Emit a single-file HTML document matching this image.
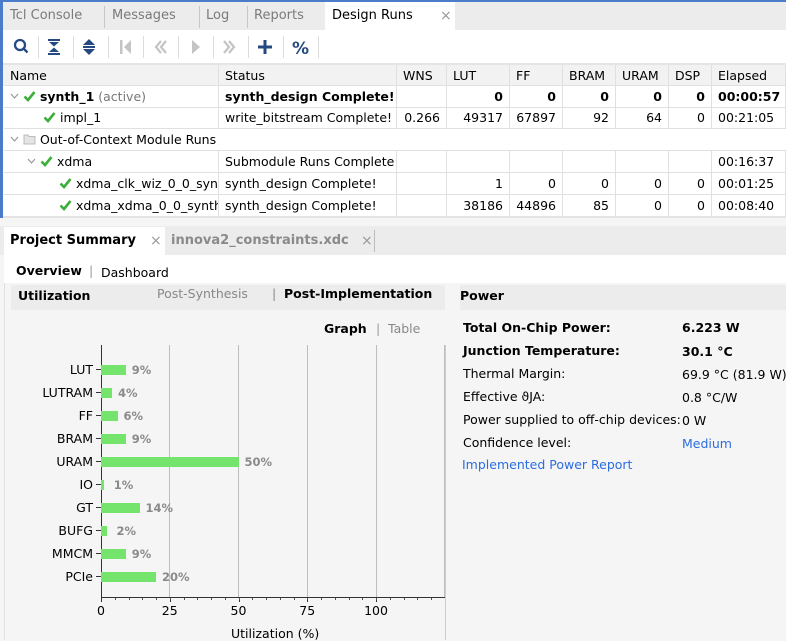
<!DOCTYPE html>
<html><head><meta charset="utf-8"><style>
*{margin:0;padding:0;box-sizing:border-box}
body{width:786px;height:640px;overflow:hidden;background:#f5f5f5;font-family:"DejaVu Sans","Liberation Sans",sans-serif;font-size:12.5px;color:#000;position:relative}
.a{position:absolute;white-space:nowrap}
.tab{position:absolute;top:2px;height:28px;line-height:28px;color:#7a7a7a;font-size:13px}
.sep{position:absolute;width:1px;background:#c8c8c8}
.cell{position:absolute;height:22px;line-height:22px;border-right:1px solid #e0e0e0;border-bottom:1px solid #e0e0e0;overflow:hidden;white-space:nowrap;padding:0 6px}
.r{text-align:right}
.b{font-weight:bold}
.ck{display:inline-block;width:13px;height:12px;vertical-align:-1px}
.cv{display:inline-block;width:9px;height:6px;vertical-align:2px}
.grid{position:absolute;top:345px;height:253px;width:1px;background:#bdbdbd}
.bar{position:absolute;height:10px;background:#74e46c;left:101px}
.yl{position:absolute;right:693px;font-size:12.5px;line-height:14px}
.pct{position:absolute;font-size:11.5px;font-weight:bold;color:#8a8a8a;line-height:14px}
</style></head><body>
<div class="a" style="left:0;top:0;width:786px;height:218px;background:#fff"></div>
<div class="a" style="left:0;top:0;width:786px;height:2px;background:#4a7cc9"></div>
<div class="a" style="left:0;top:0;width:3px;height:218px;background:#4a7cc9"></div>
<div class="a" style="left:3px;top:2px;width:783px;height:28px;background:#ececec"></div>
<div class="tab" style="left:10px">Tcl Console</div>
<div class="sep" style="left:104px;top:6px;height:22px"></div>
<div class="tab" style="left:112px">Messages</div>
<div class="sep" style="left:199px;top:6px;height:22px"></div>
<div class="tab" style="left:206px">Log</div>
<div class="sep" style="left:247px;top:6px;height:22px"></div>
<div class="tab" style="left:254px">Reports</div>
<div class="a" style="left:325px;top:2px;width:130px;height:28px;background:#fff"></div>
<div class="tab" style="left:332px;color:#000">Design Runs</div>
<div class="tab" style="left:440px;color:#999;font-size:14px">×</div>
<div class="a" style="left:3px;top:30px;width:783px;height:33px;background:#fff"></div>
<svg class="a" style="left:0;top:34px" width="330" height="26" viewBox="0 0 330 26">
<g fill="none" stroke="#254a82" stroke-width="2.3"><circle cx="20" cy="11" r="5"/><line x1="23.5" y1="14.5" x2="27.5" y2="18.5"/></g>
<g fill="#254a82"><rect x="48" y="5" width="12" height="2"/><rect x="48" y="19" width="12" height="2"/><polygon points="49,8 59,8 54,12.5"/><polygon points="49,18 59,18 54,13.5"/>
<polygon points="89,5 95,11 83,11"/><polygon points="89,21 95,15 83,15"/><rect x="83" y="12" width="12" height="2"/>
<rect x="258" y="11.5" width="14" height="3"/><rect x="263.5" y="6" width="3" height="14"/></g>
<text x="292" y="20" font-family="DejaVu Sans" font-weight="bold" font-size="17" fill="#254a82">%</text>
<g fill="#c4c4c4"><rect x="120" y="6" width="2.5" height="14"/><polygon points="131,6 131,20 124,13"/>
<polyline points="161,7 156,13 161,19" fill="none" stroke="#c4c4c4" stroke-width="2.2"/><polyline points="166,7 161,13 166,19" fill="none" stroke="#c4c4c4" stroke-width="2.2"/>
<polygon points="192,6 192,20 200,13"/>
<polyline points="224,7 229,13 224,19" fill="none" stroke="#c4c4c4" stroke-width="2.2"/><polyline points="229,7 234,13 229,19" fill="none" stroke="#c4c4c4" stroke-width="2.2"/></g>
<g fill="#dcdcdc"><rect x="38" y="2" width="1" height="22"/><rect x="73" y="2" width="1" height="22"/><rect x="108" y="2" width="1" height="22"/><rect x="143" y="2" width="1" height="22"/><rect x="178" y="2" width="1" height="22"/><rect x="213" y="2" width="1" height="22"/><rect x="248" y="2" width="1" height="22"/><rect x="283" y="2" width="1" height="22"/><rect x="318" y="2" width="1" height="22"/></g>
</svg>
<div class="a" style="left:3px;top:63px;width:783px;height:2px;background:#e4e4e4"></div>
<div class="a" style="left:3px;top:65px;width:783px;height:21px;background:#f2f2f2"></div>
<div id="tbl"></div>
<div class="a" style="left:3px;top:216px;width:783px;height:2px;background:#e4e4e4"></div>
<script>
var CK='<svg class="ck" viewBox="0 0 13 12"><polyline points="1.5,6.5 5,10 11.5,2" fill="none" stroke="#3cae3c" stroke-width="2.6"/></svg>';
var CV='<svg class="cv" viewBox="0 0 9 6"><polyline points="1,1 4.5,5 8,1" fill="none" stroke="#999" stroke-width="1.2"/></svg>';
var FD='<svg class="ck" viewBox="0 0 13 12"><path d="M1,2 h4 l1,1.5 h6 v7.5 h-11 z" fill="#e4e4e4" stroke="#bbb"/></svg>';
var cols=[4,219,397,447,510,563,616,669,712,786];
var rows=[
 [65,["Name","Status","WNS","LUT","FF","BRAM","URAM","DSP","Elapsed"],"h"],
 [86,[CV+' '+CK+' <b>synth_1</b> <span style="color:#777">(active)</span>','<b>synth_design Complete!</b>','','<b>0</b>','<b>0</b>','<b>0</b>','<b>0</b>','<b>0</b>','<b>00:00:57</b>']],
 [107,['<span style="padding-left:33px"></span>'+CK+' impl_1','write_bitstream Complete!','0.266','49317','67897','92','64','0','00:21:05']],
 [129,null],
 [151,['<span style="padding-left:17px"></span>'+CV+' '+CK+' xdma','Submodule Runs Complete','','','','','','','00:16:37']],
 [173,['<span style="padding-left:49px"></span>'+CK+' xdma_clk_wiz_0_0_synth_1','synth_design Complete!','','1','0','0','0','0','00:01:25']],
 [195,['<span style="padding-left:49px"></span>'+CK+' xdma_xdma_0_0_synth_1','synth_design Complete!','','38186','44896','85','0','0','00:08:40']]
];
var h='';
rows.forEach(function(r){
 if(!r[1]){h+='<div class="cell" style="left:4px;top:'+r[0]+'px;width:782px;border-right:none">'+CV+' '+FD+' Out-of-Context Module Runs</div>';return;}
 for(var i=0;i<9;i++){var al=(i>=2&&i<8&&r[2]!="h")?'r':'';
  h+='<div class="cell '+al+'" style="left:'+cols[i]+'px;top:'+r[0]+'px;width:'+(cols[i+1]-cols[i])+'px;'+(r[2]=="h"?'height:21px;line-height:21px;':'')+'">'+r[1][i]+'</div>';}
});
document.getElementById('tbl').innerHTML=h;
</script>
<div class="a" style="left:0;top:226px;width:786px;height:29px;background:#ececec"></div>
<div class="a" style="left:4px;top:227px;width:161px;height:28px;background:#fff"></div>
<div class="a b" style="left:10px;top:233px;font-size:13px">Project Summary</div>
<div class="a" style="left:150px;top:233px;color:#999;font-size:14px">×</div>
<div class="a b" style="left:171px;top:233px;color:#8a8a8a;font-size:13px">innova2_constraints.xdc</div>
<div class="a" style="left:361px;top:233px;color:#999;font-size:14px">×</div>
<div class="sep" style="left:374px;top:230px;height:22px;background:#bbb"></div>
<div class="a" style="left:4px;top:255px;width:782px;height:28px;background:#fff"></div>
<div class="a b" style="left:16px;top:263px">Overview</div>
<div class="a" style="left:89px;top:263px;color:#999">|</div>
<div class="a" style="left:101px;top:265px">Dashboard</div>
<div class="a" style="left:4px;top:283px;width:1px;height:357px;background:#e0e0e0"></div>
<div class="a" style="left:11px;top:285px;width:434px;height:25px;background:#ececec"></div>
<div class="a b" style="left:18px;top:288px">Utilization</div>
<div class="a" style="left:157px;top:286px;color:#888">Post-Synthesis</div>
<div class="a" style="left:272px;top:286px;color:#888">|</div>
<div class="a b" style="left:284px;top:286px">Post-Implementation</div>
<div class="a b" style="left:324px;top:321px">Graph</div>
<div class="a" style="left:376px;top:321px;color:#999">|</div>
<div class="a" style="left:388px;top:321px;color:#888">Table</div>
<div class="grid" style="left:169px"></div><div class="grid" style="left:238px"></div><div class="grid" style="left:307px"></div><div class="grid" style="left:376px"></div><div class="grid" style="left:444px"></div>
<div class="a" style="left:101px;top:345px;width:1px;height:253px;background:#333"></div>
<div class="a" style="left:101px;top:597px;width:345px;height:1px;background:#333"></div>
<div id="ch"></div>
<script>
var d=[["LUT",9],["LUTRAM",4],["FF",6],["BRAM",9],["URAM",50],["IO",1],["GT",14],["BUFG",2],["MMCM",9],["PCIe",20]];
var s='';
d.forEach(function(e,i){var y=365+i*23;var w=Math.max(2,e[1]*2.75);
 s+='<div class="yl" style="top:'+(y-2)+'px">'+e[0]+'</div>';
 s+='<div class="a" style="left:96px;top:'+(y+4)+'px;width:5px;height:1px;background:#333"></div>';
 s+='<div class="bar" style="top:'+y+'px;width:'+w+'px"></div>';
 s+='<div class="pct" style="left:'+(101+w+(w<10?10:6))+'px;top:'+(y-2)+'px">'+e[1]+'%</div>';});
[0,25,50,75,100].forEach(function(v,i){var x=101+v*2.75;
 s+='<div class="a" style="left:'+x+'px;top:598px;width:1px;height:4px;background:#333"></div>';
 s+='<div class="a" style="left:'+(x-20)+'px;top:603px;width:40px;text-align:center">'+v+'</div>';});
for(var k=1;k<25;k++){var x=101+k*2.75*5;if(x<446)s+='<div class="a" style="left:'+x+'px;top:598px;width:1px;height:2px;background:#555"></div>';}
document.getElementById('ch').innerHTML=s;
</script>
<div class="a" style="left:231px;top:626px">Utilization (%)</div>
<div class="a" style="left:460px;top:285px;width:326px;height:25px;background:#ececec"></div>
<div class="a b" style="left:460px;top:288px">Power</div>
<div class="a" style="left:445px;top:345px;width:1px;height:295px;background:#ccc"></div>
<div class="a b" style="left:463px;top:320px">Total On-Chip Power:</div>
<div class="a b" style="left:682px;top:320px">6.223 W</div>
<div class="a b" style="left:463px;top:343px">Junction Temperature:</div>
<div class="a b" style="left:682px;top:344px">30.1 °C</div>
<div class="a" style="left:463px;top:366px">Thermal Margin:</div>
<div class="a" style="left:682px;top:367px">69.9 °C (81.9 W)</div>
<div class="a" style="left:463px;top:389px">Effective ϑJA:</div>
<div class="a" style="left:682px;top:390px">0.8 °C/W</div>
<div class="a" style="left:463px;top:412px">Power supplied to off-chip devices:</div>
<div class="a" style="left:682px;top:413px">0 W</div>
<div class="a" style="left:463px;top:435px">Confidence level:</div>
<div class="a" style="left:682px;top:436px;color:#2b6de0">Medium</div>
<div class="a" style="left:462px;top:457px;color:#2b6de0">Implemented Power Report</div>
</body></html>
